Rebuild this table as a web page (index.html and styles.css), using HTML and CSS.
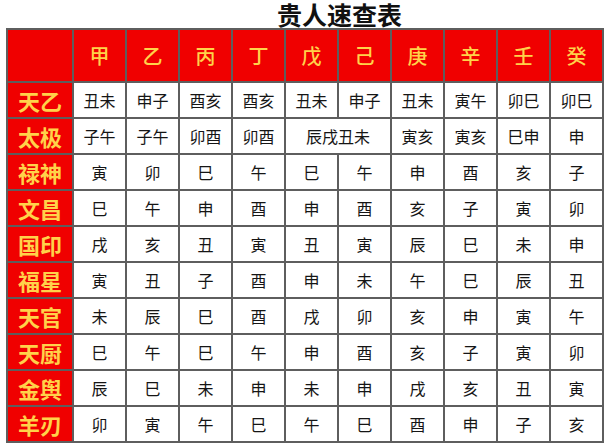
FILE: index.html
```html
<!DOCTYPE html>
<html lang="zh">
<head>
<meta charset="utf-8">
<title>贵人速查表</title>
<link rel="stylesheet" href="styles.css">
</head>
<body>
<div class="page">
  <h1 class="title">贵人速查表</h1>
  <div class="table">
    <div class="hd corner"></div>
    <div class="hd">甲</div><div class="hd">乙</div><div class="hd">丙</div><div class="hd">丁</div><div class="hd">戊</div><div class="hd">己</div><div class="hd">庚</div><div class="hd">辛</div><div class="hd">壬</div><div class="hd">癸</div>

    <div class="lb">天乙</div>
    <div class="c">丑未</div><div class="c">申子</div><div class="c">酉亥</div><div class="c">酉亥</div><div class="c">丑未</div><div class="c">申子</div><div class="c">丑未</div><div class="c">寅午</div><div class="c">卯巳</div><div class="c">卯巳</div>

    <div class="lb">太极</div>
    <div class="c">子午</div><div class="c">子午</div><div class="c">卯酉</div><div class="c">卯酉</div><div class="c span2">辰戌丑未</div><div class="c">寅亥</div><div class="c">寅亥</div><div class="c">巳申</div><div class="c">申</div>

    <div class="lb">禄神</div>
    <div class="c">寅</div><div class="c">卯</div><div class="c">巳</div><div class="c">午</div><div class="c">巳</div><div class="c">午</div><div class="c">申</div><div class="c">酉</div><div class="c">亥</div><div class="c">子</div>

    <div class="lb">文昌</div>
    <div class="c">巳</div><div class="c">午</div><div class="c">申</div><div class="c">酉</div><div class="c">申</div><div class="c">酉</div><div class="c">亥</div><div class="c">子</div><div class="c">寅</div><div class="c">卯</div>

    <div class="lb">国印</div>
    <div class="c">戌</div><div class="c">亥</div><div class="c">丑</div><div class="c">寅</div><div class="c">丑</div><div class="c">寅</div><div class="c">辰</div><div class="c">巳</div><div class="c">未</div><div class="c">申</div>

    <div class="lb">福星</div>
    <div class="c">寅</div><div class="c">丑</div><div class="c">子</div><div class="c">酉</div><div class="c">申</div><div class="c">未</div><div class="c">午</div><div class="c">巳</div><div class="c">辰</div><div class="c">丑</div>

    <div class="lb">天官</div>
    <div class="c">未</div><div class="c">辰</div><div class="c">巳</div><div class="c">酉</div><div class="c">戌</div><div class="c">卯</div><div class="c">亥</div><div class="c">申</div><div class="c">寅</div><div class="c">午</div>

    <div class="lb">天厨</div>
    <div class="c">巳</div><div class="c">午</div><div class="c">巳</div><div class="c">午</div><div class="c">申</div><div class="c">酉</div><div class="c">亥</div><div class="c">子</div><div class="c">寅</div><div class="c">卯</div>

    <div class="lb">金舆</div>
    <div class="c">辰</div><div class="c">巳</div><div class="c">未</div><div class="c">申</div><div class="c">未</div><div class="c">申</div><div class="c">戌</div><div class="c">亥</div><div class="c">丑</div><div class="c">寅</div>

    <div class="lb">羊刃</div>
    <div class="c">卯</div><div class="c">寅</div><div class="c">午</div><div class="c">巳</div><div class="c">午</div><div class="c">巳</div><div class="c">酉</div><div class="c">申</div><div class="c">子</div><div class="c">亥</div>
  </div>
</div>
</body>
</html>
```

FILE: styles.css
```css
html, body {
  margin: 0;
  padding: 0;
  background: #ffffff;
}
body {
  font-family: "Noto Sans CJK SC", "Noto Sans", sans-serif;
}
.page {
  width: 607px;
  height: 443px;
  overflow: hidden;
}
.title {
  margin: 0 0 0 277px;
  height: 28px;
  font-size: 25px;
  line-height: 28px;
  font-weight: 700;
  color: #111111;
  letter-spacing: 0;
}
.table {
  margin-left: 6px;
  width: 598px;
  box-sizing: border-box;
  display: grid;
  grid-template-columns: 64px repeat(10, 51px);
  grid-template-rows: 51px repeat(10, 34px);
  gap: 2px;
  padding: 2px;
  background: #5e5e5e;
}
.hd, .lb {
  background: #f00000;
  color: #ffd24a;
  display: flex;
  align-items: center;
  justify-content: center;
}
.hd {
  font-size: 20px;
  font-weight: 500;
}
.lb {
  font-size: 22px;
  font-weight: 700;
  letter-spacing: 0;
}
.c {
  background: #ffffff;
  color: #151515;
  font-size: 16px;
  display: flex;
  align-items: center;
  justify-content: center;
}
.span2 {
  grid-column: span 2;
}
```
